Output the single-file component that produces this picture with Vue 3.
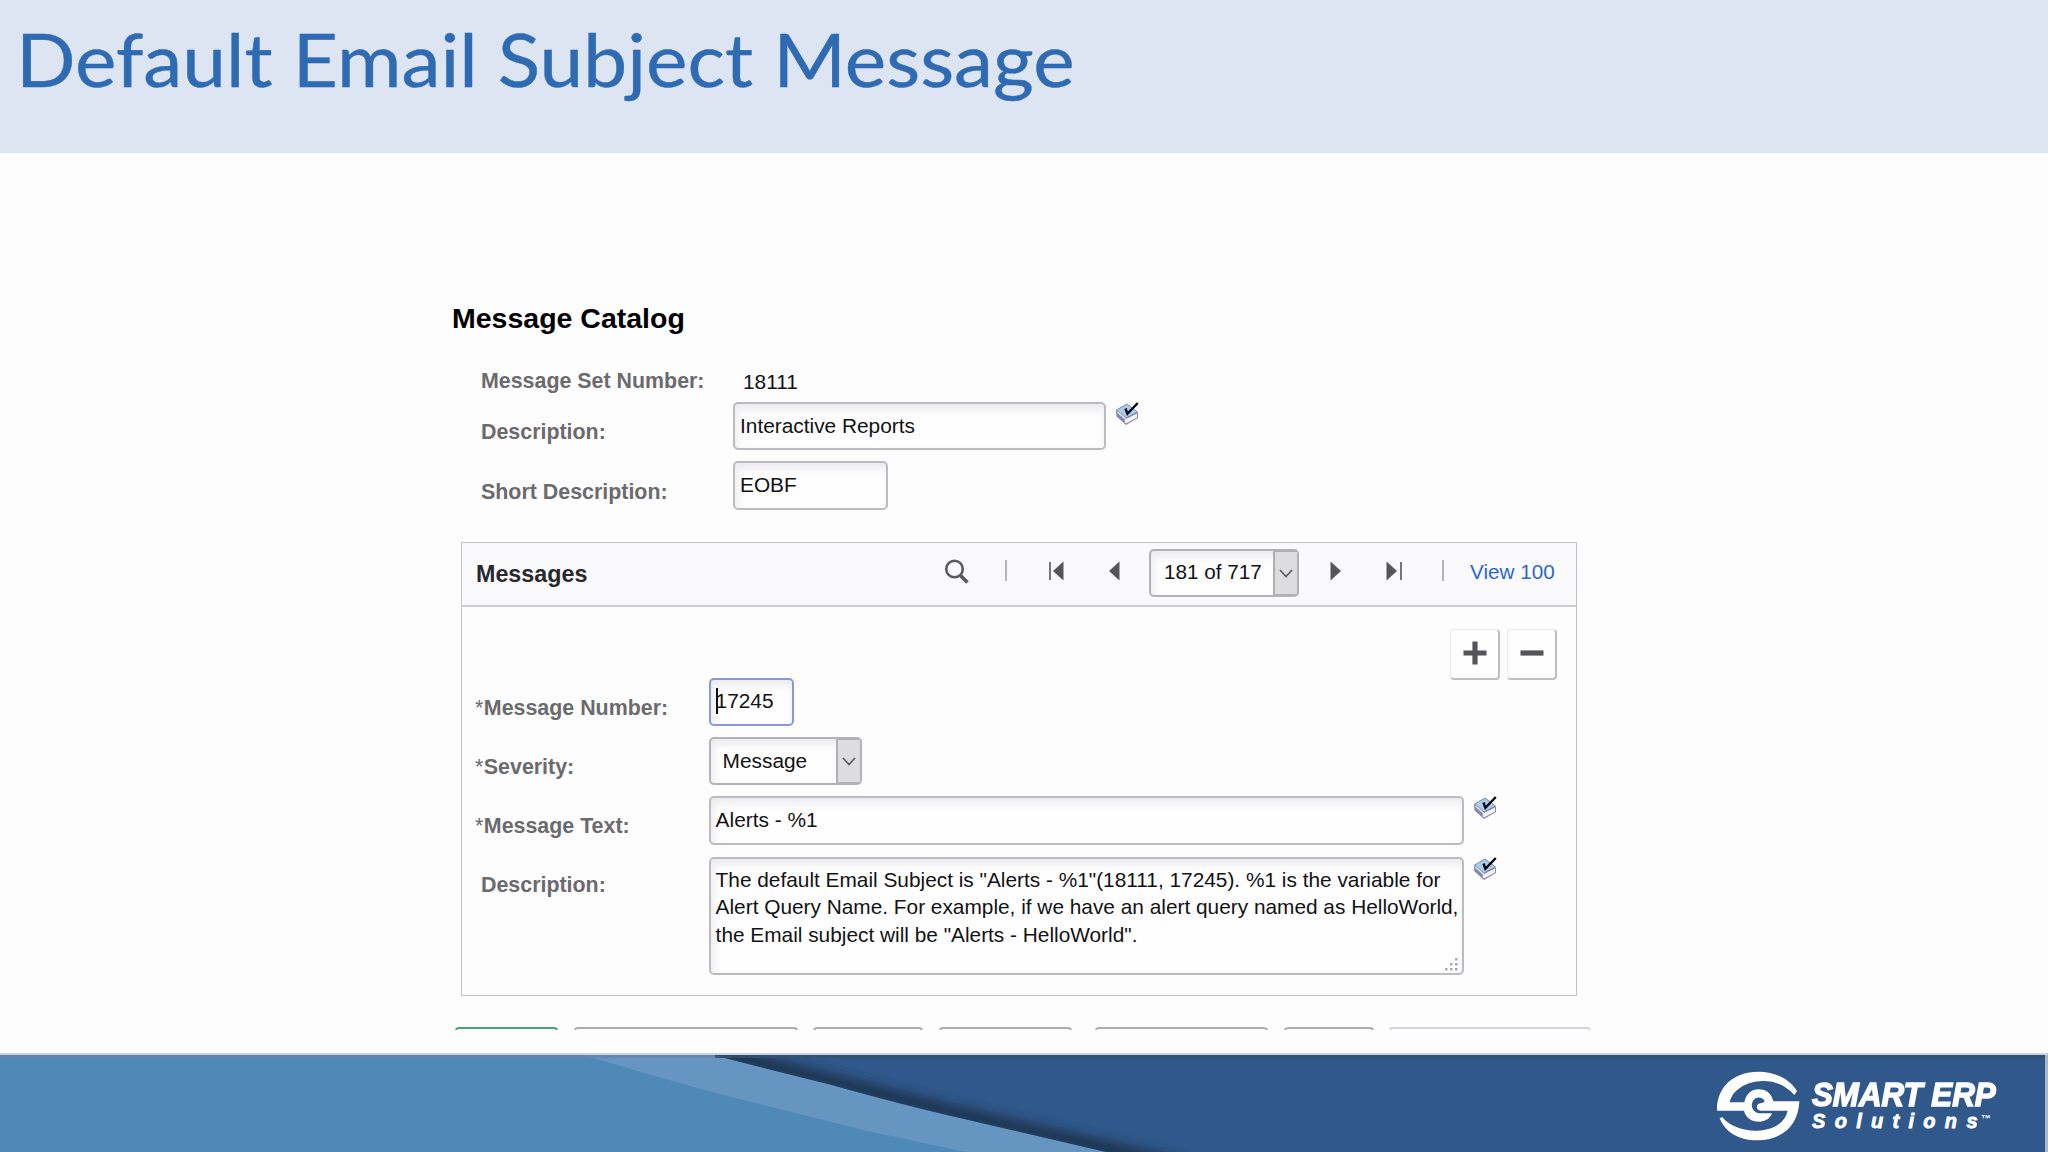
<script setup>
import { h } from 'vue'

const BookIcon = () =>
  h('svg', { width: 25, height: 24, viewBox: '0 0 25 24' }, [
    h('path', { d: 'M1 9 L12 3 L23 11 L23 16 L11 23 L1.5 14.5 Z', fill: '#8888a8' }),
    h('path', { d: 'M11 17 L22 11.5 L22 15.5 L11 21.5 Z', fill: '#f6f1f5' }),
    h('path', { d: 'M1.5 8 L12 2 L22.5 10 L11 16 Z', fill: '#a9cdee', stroke: '#71869f', 'stroke-width': 0.9 }),
    h('path', { d: 'M2.5 10 L10.5 17 L10.5 21', fill: 'none', stroke: '#e8eaf4', 'stroke-width': 1.5 }),
    h('path', { d: 'M10.5 6.5 L12.4 11.8 L22.8 1', fill: 'none', stroke: '#05070b', 'stroke-width': 2.4 })
  ])

const toolbarButtons = [
  { left: 0, width: 103, color: '#45a374' },
  { left: 16, width: 224, color: '#adabaf' },
  { left: 15, width: 110, color: '#adabaf' },
  { left: 16, width: 133, color: '#adabaf' },
  { left: 23, width: 173, color: '#adabaf' },
  { left: 16, width: 90, color: '#adabaf' },
  { left: 15, width: 202, color: '#d4d2d8' }
]
</script>

<template>
  <div class="slide">
    <header class="banner"><h1>Default Email Subject Message</h1></header>

    <main class="page">
      <h2>Message Catalog</h2>

      <section class="catalog">
        <div class="row set-row">
          <span class="label">Message Set Number:</span>
          <span class="value">18111</span>
        </div>
        <div class="row desc-row">
          <span class="label">Description:</span>
          <div class="field desc">Interactive Reports</div>
          <BookIcon class="book" />
        </div>
        <div class="row short-row">
          <span class="label">Short Description:</span>
          <div class="field short">EOBF</div>
        </div>
      </section>

      <section class="panel">
        <div class="panel-head">
          <h3>Messages</h3>
          <svg class="search" width="26" height="26" viewBox="0 0 26 26"><circle cx="10.5" cy="10" r="8.3" fill="none" stroke="#5b5a5e" stroke-width="2.6" /><path d="M16 16 L23.5 23.5" stroke="#5b5a5e" stroke-width="3.8" /></svg>
          <i class="sep sep-a"></i>
          <svg class="first" width="15" height="20" viewBox="0 0 15 20"><path d="M1 1 V19" stroke="#555458" stroke-width="1.6" /><path d="M14.5 .5 V19.5 L4 10 Z" fill="#555458" /></svg>
          <svg class="prev" width="11" height="20" viewBox="0 0 11 20"><path d="M10.5 .5 V19.5 L0 10 Z" fill="#555458" /></svg>
          <div class="select pager"><span>181 of 717</span><b><svg width="14" height="9" viewBox="0 0 14 9"><path d="M1 1 L7 7.5 L13 1" /></svg></b></div>
          <svg class="next" width="11" height="20" viewBox="0 0 11 20"><path d="M.5 .5 V19.5 L11 10 Z" fill="#555458" /></svg>
          <svg class="last" width="16" height="20" viewBox="0 0 16 20"><path d="M.5 .5 V19.5 L11 10 Z" fill="#555458" /><path d="M15 1 V19" stroke="#555458" stroke-width="1.6" /></svg>
          <i class="sep sep-b"></i>
          <a class="view">View 100</a>
        </div>

        <div class="panel-body">
          <div class="actions">
            <button><svg width="24" height="24" viewBox="0 0 24 24"><path d="M.5 12 H23.5 M12 .5 V23.5" /></svg></button>
            <button><svg width="24" height="24" viewBox="0 0 24 24"><path d="M.5 12 H23.5" /></svg></button>
          </div>
          <div class="row number-row">
            <span class="label"><em>*</em>Message Number:</span>
            <div class="field number">17245</div>
          </div>
          <div class="row severity-row">
            <span class="label"><em>*</em>Severity:</span>
            <div class="select severity"><span>Message</span><b><svg width="14" height="9" viewBox="0 0 14 9"><path d="M1 1 L7 7.5 L13 1" /></svg></b></div>
          </div>
          <div class="row text-row">
            <span class="label"><em>*</em>Message Text:</span>
            <div class="field text">Alerts - %1</div>
            <BookIcon class="book" />
          </div>
          <div class="row long-row">
            <span class="label indent">Description:</span>
            <div class="field long">
              <div>The default Email Subject is "Alerts - %1"(18111, 17245). %1 is the variable for</div>
              <div>Alert Query Name. For example, if we have an alert query named as HelloWorld,</div>
              <div>the Email subject will be "Alerts - HelloWorld".</div>
              <svg class="grip" width="13" height="13" viewBox="0 0 13 13"><path d="M10 0h2.5v2.5h-2.5z M5 5h2.5v2.5h-2.5z M10 5h2.5v2.5h-2.5z M0 10h2.5v2.5h-2.5z M5 10h2.5v2.5h-2.5z M10 10h2.5v2.5h-2.5z" fill="#aaa8ad" /></svg>
            </div>
            <BookIcon class="book" />
          </div>
        </div>
      </section>

      <div class="toolbar">
        <i v-for="(b, n) in toolbarButtons" :key="n" :style="{ width: b.width + 'px', marginLeft: b.left + 'px', borderColor: b.color }"></i>
      </div>
    </main>

    <footer class="footer">
      <svg class="swoosh" width="2048" height="99" viewBox="0 0 2048 99">
        <defs>
          <filter id="soft" x="-10%" y="-30%" width="120%" height="160%"><feGaussianBlur stdDeviation="6" /></filter>
          <clipPath id="navy"><path d="M710 1 Q770 17 828 31 Q900 51 947 62 L1106 99 H2045 V1 Z" /></clipPath>
        </defs>
        <rect width="2048" height="99" fill="#4f89b8" />
        <path d="M580 1 Q650 22 716 40 Q790 59 863 77 L966 99 H1110 L947 62 Q900 51 828 31 Q770 17 710 1 Z" fill="#6695c1" />
        <g clip-path="url(#navy)">
          <rect x="700" width="1348" height="99" fill="#30588a" />
          <path d="M690 -8 L828 27 L947 58 L1180 112" fill="none" stroke="#1c304c" stroke-width="14" filter="url(#soft)" />
        </g>
        <rect width="715" y="2" height="3" fill="#6583ac" opacity=".8" />
        <rect x="715" y="2" width="1330" height="3" fill="#34506f" opacity=".85" />
        <rect x="2045" width="3" height="99" fill="#a9b9cb" />
        <rect width="2048" height="2" fill="#c5d4e6" />
      </svg>
      <div class="brand">
        <svg width="84" height="70" viewBox="108 91 252 210" fill="#fff">
          <path d="M111 210 C109 140 160 93 235 93 C290 93 330 118 351 151 L343 163 C318 135 285 120 248 121 C198 122 157 148 149 185 H193 C198 160 213 146 236 146 C260 146 275 160 280 182 H358 C356 250 310 299 232 299 C173 299 134 272 119 232 L127 230 C152 258 190 271 231 270 C282 269 315 246 323 210 H242 C231 210 227 198 234 191 C240 185 249 190 254 181 C248 168 228 166 219 180 C210 196 219 216 238 218 H276 C270 234 256 243 237 243 C213 243 197 230 192 210 Z" />
        </svg>
        <div class="names">
          <div class="name">SMART ERP</div>
          <div class="sub"><span>Solutions</span><small>™</small></div>
        </div>
      </div>
    </footer>
  </div>
</template>

<style>
body { margin: 0; background: #fdfdfe; }
</style>

<style scoped>
.slide { width: 2048px; height: 1152px; overflow: hidden; display: flex; flex-direction: column; background: #fdfdfe; font-family: "Liberation Sans", Arial, sans-serif; font-size: 20.85px; color: #121214; }
h1, h2, h3 { margin: 0; }
.banner { height: 153px; flex: none; background: #dde4f2; }
h1 { font: 400 74px/90px Lato, sans-serif; color: #2f6bb3; padding: 14px 0 0 15px; white-space: nowrap; width: max-content; transform-origin: 0 0; transform: scaleX(1.06); -webkit-text-stroke: .4px #2f6bb3; }
.page { height: 900px; flex: none; box-sizing: border-box; padding: 145px 0 0 452px; }
h2 { font-size: 28.5px; line-height: 40px; height: 71px; color: #000; white-space: nowrap; }
.row { display: flex; align-items: flex-start; }
.label { flex: none; font-size: 21.4px; font-weight: 700; line-height: 24px; color: #6b6a6d; white-space: nowrap; box-sizing: border-box; }
.label em { font-style: normal; font-weight: 400; margin-right: .5px; }
.catalog { padding-left: 29px; height: 173px; }
.catalog .label { width: 252px; }
.set-row { height: 33px; }
.value { padding-left: 10px; line-height: 24px; padding-top: 1px; }
.desc-row { height: 59px; }
.desc-row .label { padding-top: 18px; }
.short-row .label { padding-top: 19px; }
.field { position: relative; flex: none; box-sizing: border-box; border: 2px solid #bdbbc0; border-radius: 5px; background: #fefefe; box-shadow: inset 2px 5px 8px #ebe9ee; padding-left: 5px; white-space: nowrap; }
.desc { width: 373px; height: 48px; line-height: 44px; }
.short { width: 155px; height: 49px; line-height: 44px; }
.book { margin-left: 9px; flex: none; }
.panel { margin-left: 9px; width: 1116px; height: 454px; box-sizing: border-box; border: 1px solid #c4c2c7; padding: 0; }
.panel-head { display: flex; align-items: flex-start; height: 62px; background: #faf9fc; border-bottom: 2px solid #cfcdd2; box-sizing: border-box; height: 64px; }
h3 { font-size: 23.3px; line-height: 30px; padding: 16px 0 0 14px; width: 470px; color: #29292d; box-sizing: border-box; flex: none; }
.search { margin: 16px 0 0 12px; flex: none; }
.sep { width: 2px; height: 21px; background: #b4b2c2; margin-top: 17px; flex: none; }
.sep-a { margin-left: 35px; }
.first { margin: 18px 0 0 42px; }
.prev { margin: 18px 0 0 45px; }
.select { display: flex; flex: none; box-sizing: border-box; border: 2px solid #b4b2b6; border-radius: 5px; background: #fefefe; box-shadow: inset 2px 5px 8px #ebe9ee; white-space: nowrap; }
.select span { flex: 1; }
.select b { width: 22px; background: #dddcdf; border: 1px solid #b0aeb2; border-width: 1px 0 1px 2px; display: flex; align-items: center; justify-content: center; }
.select b path { fill: none; stroke: #5e5d61; stroke-width: 1.7; }
.pager { width: 150px; height: 48px; margin: 6px 0 0 29px; line-height: 42px; font-size: 20.7px; padding-left: 13px; }
.next { margin: 18px 0 0 31px; }
.last { margin: 18px 0 0 45px; }
.sep-b { margin-left: 40px; }
.view { margin: 14px 0 0 26px; font-size: 20.7px; line-height: 30px; color: #2f66d3; white-space: nowrap; }
.panel-body { padding-left: 13px; }
.actions { display: flex; justify-content: flex-end; gap: 7px; padding: 22px 19px 0 0; height: 49px; }
button { width: 50px; height: 51px; padding: 0; border: 1px solid #e9e8eb; border-right: 2px solid #c0bec3; border-bottom: 2px solid #c0bec3; border-radius: 4px; background: #fefefe; display: flex; align-items: center; justify-content: center; flex: none; }
button svg { margin-bottom: 2px; }
button path { stroke: #555458; stroke-width: 5.2; fill: none; }
.panel-body .label { width: 233.6px; padding-top: 18px; }
.panel-body .label.indent { padding: 16px 0 0 6px; }
.number-row, .severity-row { height: 59px; }
.text-row { height: 61px; }
.number { width: 85px; height: 48px; line-height: 42px; border-color: #8797e0; }
.number::before { content: ""; position: absolute; left: 5px; top: 8px; width: 2px; height: 26px; background: #111; }
.severity { width: 153px; height: 48px; line-height: 44px; padding-left: 12px; }
.text { width: 755px; height: 49px; line-height: 44px; }
.long { width: 755px; height: 118px; line-height: 27.3px; padding-top: 7px; font-size: 20.83px; }
.grip { position: absolute; right: 4px; bottom: 2px; }
.toolbar { display: flex; height: 3px; overflow: hidden; padding: 31px 0 0 3px; }
.toolbar i { flex: none; box-sizing: border-box; height: 20px; border: 2px solid; border-radius: 4px; }
.footer { position: relative; height: 99px; flex: none; }
.swoosh { display: block; }
.brand { position: absolute; left: 1716px; top: 18px; display: flex; color: #fff; font-style: italic; font-weight: 700; white-space: nowrap; }
.names { padding-left: 12px; }
.name { font-size: 34px; line-height: 36px; transform-origin: 0 0; transform: scaleX(.92); -webkit-text-stroke: 1.5px #fff; margin-top: 5px; height: 36px; }
.sub { display: flex; align-items: flex-start; font-size: 20px; line-height: 23px; -webkit-text-stroke: .8px #fff; margin-top: -2px; }
.sub span { letter-spacing: 9.3px; margin-right: -6px; }
.sub small { font-size: 10px; line-height: 18px; -webkit-text-stroke: 0; }
</style>
